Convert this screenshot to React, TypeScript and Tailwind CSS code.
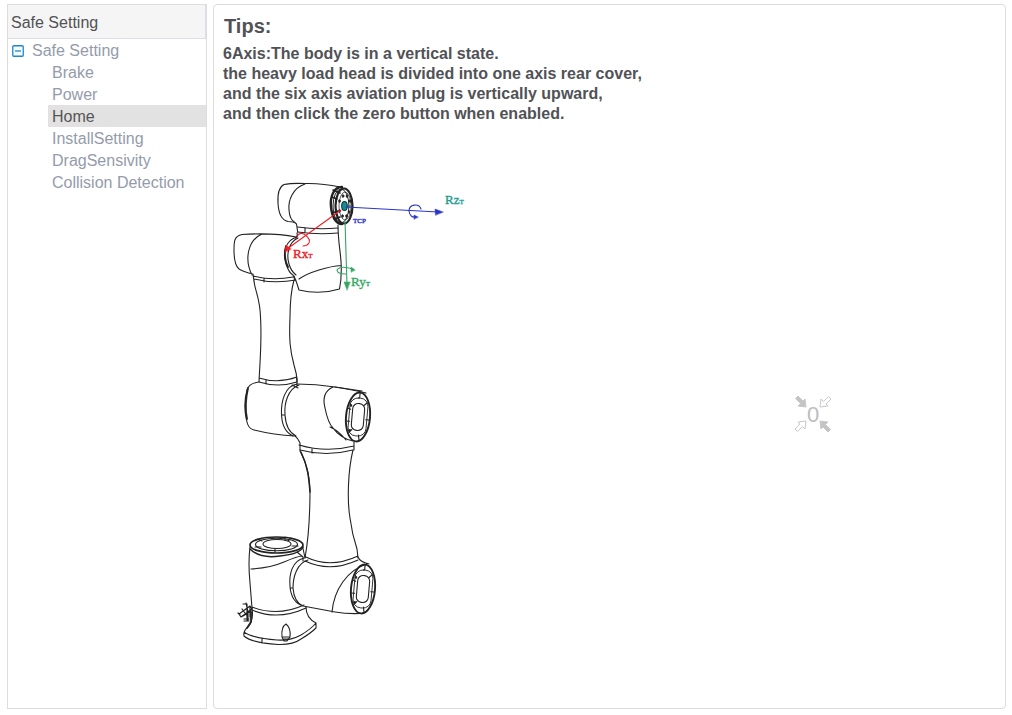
const items = ["Brake", "Power", "Home", "InstallSetting", "DragSensivity", "Collision Detection"];

function Sidebar() {
  return (
    <nav className="w-[200px] shrink-0 border border-[#dcdcde]" aria-label="Safe Setting">
      <h2 className="flex h-[34px] items-center border-r border-b border-[#dcdfe6] bg-[#f5f5f5] pt-0.5 pl-[3px] text-[#515256]">
        Safe Setting
      </h2>
      <ul>
        <li>
          <button className="flex h-[22px] items-center gap-2 pt-px pl-1 text-[#949bab]">
            <svg width="12" height="12" viewBox="0 0 12 12" aria-hidden="true">
              <rect x=".75" y=".75" width="10.5" height="10.5" rx="1" fill="#f2fbff" stroke="#2585cb" strokeWidth="1.3" />
              <path d="M3 6h6" stroke="#2585cb" strokeWidth="1.3" />
            </svg>
            Safe Setting
          </button>
          <ul className="pl-10">
            {items.map((item) => (
              <li key={item}>
                <a
                  href="#"
                  className={
                    item === "Home"
                      ? "block h-[22px] bg-[#e2e2e2] pl-1 leading-6 text-[#555555]"
                      : "block h-[22px] pl-1 leading-6 text-[#949bab]"
                  }
                >
                  {item}
                </a>
              </li>
            ))}
          </ul>
        </li>
      </ul>
    </nav>
  );
}

function RobotArm() {
  return (
    <svg width="250" height="488" viewBox="225 170 250 488" fill="none" stroke="#222" strokeWidth="1.1" strokeLinecap="round" strokeLinejoin="round" role="img" aria-label="Robot arm">
      {/* tool head */}
      <path d="M340 187Q322 183 305 183.500Q291 183 284 184.500C279 187 277.500 195 278 203C278.500 213 281 220 288 221.500Q294 221.500 296.500 224L297.700 232" />
      <path d="M305 184C293 188 288 200 289 210C289.500 218 292 221 295 222.500M297.500 227Q318 230 338 228M297.500 232Q318 235 338 233M305 227.500v5" />
      <path d="M342 187C333 187 330 198 331 207C332 217 336 224 342 224" strokeWidth="2.400" />
      <ellipse cx="344" cy="206" rx="8.500" ry="17.500" strokeWidth="2.200" />
      <ellipse cx="341" cy="206" rx="8" ry="17" strokeWidth="1" />
      <ellipse cx="345" cy="206" rx="6" ry="14" strokeWidth=".7" />
      <path d="M333 190l7 3M332 197l5 2M332 213l6-2M334 219l6-2" strokeWidth="1.600" />
      <ellipse cx="344.500" cy="206" rx="2.800" ry="4.500" fill="#168b91" stroke="#063b40" />
      {[[343, 196], [347, 196], [339.5, 201], [350, 201], [339.5, 211], [349, 212], [342.500, 216], [346.500, 216]].map(([cx, cy], i) => (
        <ellipse key={i} cx={cx} cy={cy} rx="1" ry="1.500" fill="#222" strokeWidth=".5" />
      ))}
      {/* wrist */}
      <path d="M338 225C338 243 341 253 341.300 267Q341.500 279 339.500 289Q320 295 299 290Q297 283 294 276M299 279Q306 274 319 270T341 265.500M297 233Q298 236 295.500 238" />
      <path d="M296 237C277 233 257 233.500 242 234.500C234 236 234 242 234 250Q234 265 239 269Q244 272 253 274L254 281M262 234C248 240 244 259 252 275M253 276Q273 281 293 277M254 279Q274 284 296 280M264 278v4" />
      <path d="M297 237C286 240 282 252 286 264Q289 273 293 275L295 280M298 238C289 242 286 254 289 264Q291 271 296 275" />
      <path d="M286 246C284 253 285 262 288 267" strokeWidth="1.800" />
      {/* forearm */}
      <path d="M254 281C255 291 260 298 260.500 317C262 341 260 360 259 382M294 280C291 291 290 302 290 317C289 340 290 350 294 365Q297 374 297 382M259 378Q278 384 297 377M259 382Q278 388 297 382M266 380v4" />
      {/* elbow */}
      <path d="M259 382Q249 383 247 390Q243 405 246.500 420Q248 429 254 430Q274 435 295 436Q298 438 300 443V450M297 384Q316 384 335 387T366 393" />
      <path d="M248 388Q244 405 247 419" strokeWidth="1.900" />
      <path d="M297 384C285 386 281 401 281.500 414Q282 431 293 436M299 385C288 389 284 403 285 415Q286 431 296 436M281.500 415h3.500M292 385l6 3M297 378v8" />
      <path d="M333 387C324 391 323 400 325 408Q328 423 333 428Q340 438 353 441M335 387L362 391M330 427Q338 430 346 440" />
      <Cap cx={358} cy={417} />
      {/* upper arm */}
      <path d="M299 445Q326 453 354 446M300 450Q326 457 353 450M354 442V450M312 449v4M300 451C306 463 309 471 310 490Q310 530 305 558M353 450C348 470 347 500 350 518Q352 534 357 549L358 558M306 557Q330 569 358 556M305 561Q330 573 358 560" />
      <path d="M301 452C308 466 309 480 310 492" strokeWidth="1.500" />
      {/* shoulder */}
      <path d="M304 558C292 561 289 574 290 586Q291 602 303 606M308 560C297 563 293 577 293 588Q294 602 303 606M290 588h3M303 606L335 612Q347 614 360 613.500M358 557Q360 562 369 564M367 564C347 570 334 590 332 612" />
      <Cap cx={363} cy={589} />
      {/* pedestal */}
      <g>
        <path d="M250 547Q248 563 250 583L252 608M251 569Q270 568 284 562T302 556M302.500 546L305 558M297 552l6 5v4M252 607Q278 617 304 605M252 610Q278 621 306 608" />
        <ellipse cx="276.500" cy="545" rx="26.500" ry="8" strokeWidth="1.700" />
        <path d="M250 549Q260 559 280 556Q300 554 303 547" strokeWidth="1.500" />
        <ellipse cx="276.500" cy="544.500" rx="21" ry="6.300" />
        <ellipse cx="277" cy="544" rx="14" ry="4.500" />
        <path d="M258 539l4 2M291 538l-3 3M255 547h6M298 546h-6M275 549v3M285 537v3" />
        <path d="M252 608Q254 620 248 627Q243 631 244 636Q252 643 278 644.500Q293 645 301 639Q311 633 316 628V623Q306 618 306 607M244 632Q252 638 277 640Q290 641 301 635Q311 629 316 623M262 638v5" />
        <path d="M251 612v10l-4 6" strokeWidth="1.800" />
        <path d="M282 637Q281 627 286 624Q291 628 290 637L287 641H284ZM283 637h6M284 639h5" />
        <path d="M239 614L250 606L252 609L241 617ZM246 603l2 9M243 604h4v16M248 611v9M243 616l8-5M242 609l6 8M244 619h5M244 621h5M240 615l-2-2M250 607v10" strokeWidth="1.200" />
      </g>
      {/* tool frame axes */}
      <g stroke="#2935c4" fill="#2935c4">
        <path d="M346 207L438 212" fill="none" />
        <path d="M443 212l-8-3 .5 6Z" strokeWidth=".5" />
        <path d="M421 209C419 203 409 204 409 211Q410 218 416 217" fill="none" />
        <path d="M418 217l-4-2v4Z" strokeWidth=".5" />
      </g>
      <g stroke="#35a765" fill="#35a765">
        <path d="M345 220L347 286" fill="none" />
        <path d="M347 290l-3-8h6Z" strokeWidth=".5" />
        <path d="M346 274Q337 274 337 270Q340 265 353 269" fill="none" />
        <path d="M355 270l-4-3v5Z" strokeWidth=".5" />
      </g>
      <g stroke="#ee2028" fill="#ee2028">
        <path d="M341 210L287 249" fill="none" />
        <path d="M285 252l1-7 5 4Z" strokeWidth=".5" />
        <path d="M297 237Q299 232 304 234Q311 239 309 243Q307 246 303 246" fill="none" />
      </g>
      <g className="font-['Liberation_Serif',serif]" fontSize="13" strokeWidth=".4">
        <text x="293" y="258" fill="#ee2028" stroke="#ee2028">Rx<tspan fontSize="7">T</tspan></text>
        <text x="351" y="286" fill="#35a765" stroke="#35a765">Ry<tspan fontSize="7">T</tspan></text>
        <text x="445" y="204" fill="#249b91" stroke="#249b91">Rz<tspan fontSize="7">T</tspan></text>
        <text x="353" y="223" fontSize="7" fill="#2935c4" stroke="#2935c4">TCP</text>
      </g>
    </svg>
  );
}

function Cap({ cx, cy }: { cx: number; cy: number }) {
  return (
    <g transform={`translate(${cx} ${cy}) rotate(5)`}>
      <ellipse rx="12" ry="24.500" strokeWidth="1.900" />
      <rect x="-9" y="-19" width="18" height="38" rx="8" strokeWidth=".9" />
      <rect x="-6" y="-13.500" width="12" height="27" rx="5.500" />
      <path d="M0-24v5M-11-8l3 1M-12 5h4M-8 16l3-3M3 23l-1-5M8-15l-3 3M11 2H8" />
      <path d="M-8-11v.1M-7 14v.1" strokeWidth="2.600" />
    </g>
  );
}

function ZeroButton() {
  const arrow = "M0 0l-8-1 2.500-2.500-5-5 2.500-2.500 5 5L-1-8Z";
  return (
    <button aria-label="Zero">
      <svg width="40" height="40" viewBox="-20 -20 40 40" fill="none" stroke="#c8c8c8" strokeWidth="1">
        <path d={arrow} transform="translate(-7 -7)" fill="#c4c4c4" />
        <path d={arrow} transform="translate(7 -7) rotate(90)" />
        <path d={arrow} transform="translate(7 7) rotate(180)" fill="#c4c4c4" />
        <path d={arrow} transform="translate(-7 7) rotate(270)" />
        <text y="8" textAnchor="middle" fontSize="22" fill="#bcbcbc" stroke="none">0</text>
      </svg>
    </button>
  );
}

export default function App() {
  return (
    <div className="flex min-h-screen gap-1.5 bg-white pt-1 pr-1.5 pb-1.5 pl-[7px] font-['Liberation_Sans',Arial,sans-serif] text-base">
      <Sidebar />
      <main className="min-w-0 flex-1 rounded-[4px] border border-[#dcdcde] pt-[9px] text-[#515256]">
        <h1 className="pl-2.5 text-xl leading-6 font-bold">Tips:</h1>
        <p className="mt-1.5 pl-[9px] leading-5 font-bold">
          6Axis:The body is in a vertical state.
          <br />
          the heavy load head is divided into one axis rear cover,
          <br />
          and the six axis aviation plug is vertically upward,
          <br />
          and then click the zero button when enabled.
        </p>
        <div className="mt-[46px] grid grid-cols-2 items-center gap-x-3 pl-[11px]">
          <RobotArm />
          <div className="flex justify-center">
            <ZeroButton />
          </div>
        </div>
      </main>
    </div>
  );
}
